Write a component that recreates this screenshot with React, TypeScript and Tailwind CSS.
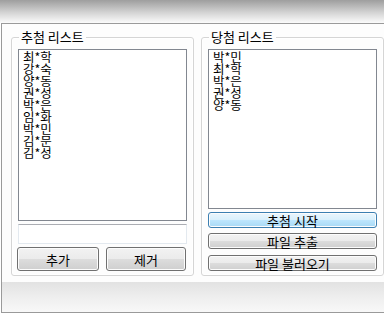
import React from "react";

const font = { fontFamily: '"Noto Sans CJK KR", "Noto Sans", sans-serif' };

function Btn({ label, cls, blue }: { label: string; cls: string; blue?: boolean }) {
  return (
    <div
      className={
        "flex items-center justify-center rounded-[3px] border text-[13px] leading-[13px] text-black shadow-[inset_0_0_0_1px_#fcfcfc] " +
        (blue
          ? "border-[#3c7fb1] bg-[linear-gradient(#eaf6fd,#d9f0fc_50%,#bee6fd_50%,#a7d9f5)] "
          : "border-[#707070] bg-[linear-gradient(#f2f2f2,#ebebeb_50%,#dddddd_50%,#cfcfcf)] ") +
        cls
      }
    >
      {label}
    </div>
  );
}

function ListBox({ items, h }: { items: string[]; h: string }) {
  return (
    <div className={"w-[169px] border border-[#828790] bg-white pl-[4px] pt-[1px] text-[12.5px] leading-[12px] text-black " + h}>
      {items.map((t) => (
        <div key={t} className="h-[12px] whitespace-nowrap">
          {t}
        </div>
      ))}
    </div>
  );
}

function Group({ title, children, cls }: { title: string; children: React.ReactNode; cls?: string }) {
  return (
    <div className={"relative mt-[13px] w-[183px] shrink-0 rounded-[3px] border border-[#d5d5d5] pb-[4px] pl-[6px] pr-[6px] pt-[11px] shadow-[inset_0_0_0_1px_#ffffff] " + (cls ?? "")}>
      <div className="absolute left-[7px] top-[-8px] bg-[#fdfdfd] px-[2px] text-[13px] leading-[14px] text-black">
        {title}
      </div>
      {children}
    </div>
  );
}

export default function App() {
  return (
    <div className="flex h-[318px] w-[384px] flex-col overflow-hidden bg-white" style={font}>
      <div className="h-[23px] shrink-0 bg-[linear-gradient(#9e9e9e,#d4d4d4_55%,#fbfbfb)]" />
      <div className="ml-px flex h-[290px] shrink-0 flex-col border-b border-l border-t border-[#9a9a9a] bg-[#fdfdfd]">
        <div className="flex pl-[9px]">
          <Group title="추첨 리스트">
            <ListBox h="h-[172px]" items={["최*학", "강*숙", "양*동", "권*성", "박*은", "임*화", "박*민", "김*문", "김*성"]} />
            <div className="mt-[3px] h-[20px] w-[169px] border border-[#e3e9ef] border-t-[#abadb3] bg-white" />
            <div className="-ml-px mt-[3px] flex">
              <Btn label="추가" cls="h-[24px] w-[82px]" />
              <Btn label="제거" cls="ml-[7px] h-[24px] w-[80px]" />
            </div>
          </Group>
          <Group title="당첨 리스트" cls="ml-[7px]">
            <ListBox h="h-[160px]" items={["박*민", "최*학", "박*은", "권*성", "양*동"]} />
            <Btn blue label="추첨 시작" cls="mt-[3px] h-[16px] w-[169px]" />
            <Btn label="파일 추출" cls="mt-[5px] h-[16px] w-[169px]" />
            <Btn label="파일 불러오기" cls="mt-[6px] h-[16px] w-[169px]" />
          </Group>
        </div>
        <div className="mt-[6px] flex-1 bg-[linear-gradient(#e2e2e2,#eeeeee_50%,#f8f8f8)]" />
      </div>
    </div>
  );
}
